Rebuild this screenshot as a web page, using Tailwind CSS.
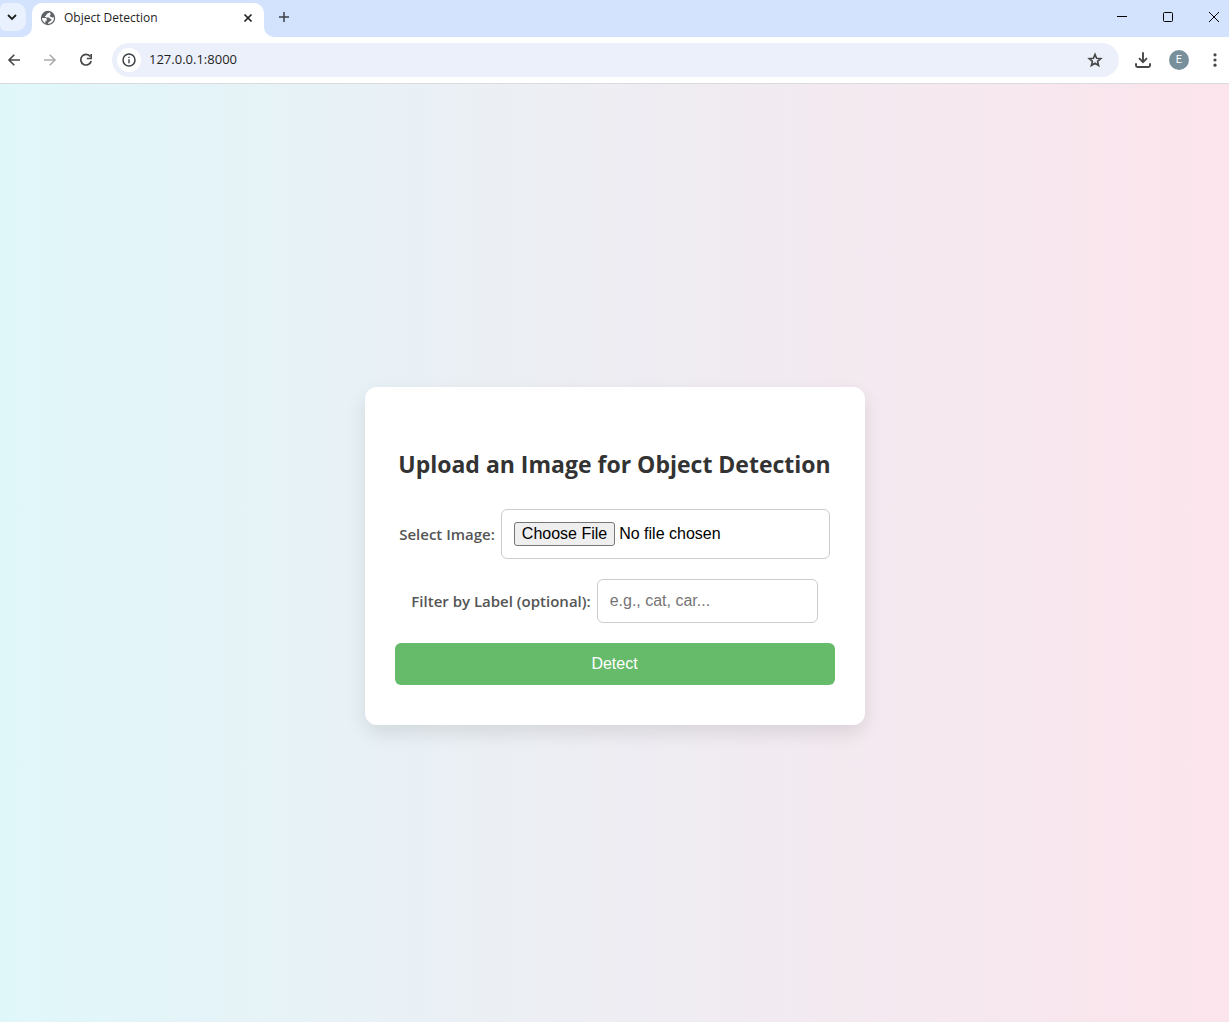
<!DOCTYPE html>
<html lang="en">
<head>
<meta charset="utf-8">
<meta name="viewport" content="width=device-width, initial-scale=1">
<title>Object Detection</title>
<script src="https://cdn.jsdelivr.net/npm/@tailwindcss/browser@4"></script>
</head>
<body class="flex min-h-screen flex-col bg-white font-['Open_Sans','Noto_Sans',sans-serif] text-[#1f1f1f]">

<!-- Tab strip -->
<header class="flex h-[37px] shrink-0 items-start bg-[#d3e3fd] pt-[3px]">
  <button type="button" aria-label="Search tabs" class="flex h-7 w-[26px] items-center justify-center rounded-r-[10px] rounded-l-md bg-[#eaf1fe]">
    <svg class="size-3 -translate-x-px" viewBox="0 0 12 12" fill="none" stroke="#1f1f1f" stroke-width="1.8"><path d="M2 4l4 4 4-4"/></svg>
  </button>
  <div class="relative ml-1.5 flex h-[34px] w-[232px] items-center rounded-t-[10px] bg-white pr-2.5 pb-1 pl-2">
    <svg class="absolute bottom-0 -left-2.5 size-2.5" viewBox="0 0 10 10" fill="#fff"><path d="M10 0v10H0A10 10 0 0 0 10 0z"/></svg>
    <svg class="absolute -right-2.5 bottom-0 size-2.5" viewBox="0 0 10 10" fill="#fff"><path d="M0 0v10h10A10 10 0 0 1 0 0z"/></svg>
    <svg class="size-4" viewBox="0 0 16 16"><circle cx="8" cy="8" r="7.2" fill="#5f6368"/><path d="M9.200 2.200C8.800 3.300 7.800 3.200 7 3.700c-.7.5-.2 1.300-.9 1.800-.6.4-1.200.3-1.200 1.100 0 .7.600.9 1.300.9h2.300c1 0 1.100.7 1.300 1.300.9-.1 1.700.4 1.700 1.200 0 .7-.6.9-1.200.9-.9 0-.8.900-1.300 1.300-.4.300-.9.300-.9.800v.9a6 6 0 0 0 5.800-6.900c-.9.7-1.800.5-2.500-.1-.6-.5-1.600-.1-1.700-1-.1-.7.8-.8.900-1.500.1-.6-.3-1.100-.3-1.500z" fill="#fff"/><path d="M2 8.100h3.300c1 0 1.500.7 1.500 1.500v1.200H5.400v2.500A6 6 0 0 1 2 8.100z" fill="#fff"/></svg>
    <span class="ml-2 flex-1 text-xs">Object Detection</span>
    <button type="button" aria-label="Close tab" class="size-3"><svg viewBox="0 0 12 12" fill="none" stroke="#1f1f1f" stroke-width="1.7"><path d="M2.500 2.500l7 7M9.500 2.500l-7 7"/></svg></button>
  </div>
  <button type="button" aria-label="New tab" class="ml-3.5 flex h-7 items-center"><svg class="size-3" viewBox="0 0 12 12" fill="none" stroke="#3c4043" stroke-width="1.500"><path d="M6 1v10M1 6h10"/></svg></button>
  <div class="ml-auto flex h-7 items-center gap-[34px] pr-[9px]">
    <button type="button" aria-label="Minimize" class="size-3"><svg viewBox="0 0 12 12" shape-rendering="crispEdges"><path d="M1 5h10v1H1z"/></svg></button>
    <button type="button" aria-label="Maximize" class="size-3"><svg viewBox="0 0 12 12" fill="none" stroke="#000"><rect x="1.500" y="1.500" width="9" height="9" rx="1"/></svg></button>
    <button type="button" aria-label="Close" class="size-3"><svg viewBox="0 0 12 12" fill="none" stroke="#000"><path d="M1 1l10 10M11 1L1 11"/></svg></button>
  </div>
</header>

<!-- Toolbar -->
<nav class="flex h-[47px] shrink-0 items-center border-b border-[#d8dce0] bg-white pr-[9px] pl-1.5">
  <button type="button" aria-label="Back" class="size-4"><svg viewBox="0 0 16 16" fill="none" stroke="#474747" stroke-width="1.600"><path d="M14 8H3.500M8.300 2.700L3 8l5.300 5.300"/></svg></button>
  <button type="button" aria-label="Forward" class="ml-5 size-4"><svg viewBox="0 0 16 16" fill="none" stroke="#adadad" stroke-width="1.600"><path d="M2 8h10.500M7.700 2.700L13 8l-5.300 5.300"/></svg></button>
  <button type="button" aria-label="Reload" class="ml-5 size-4"><svg viewBox="0 0 16 16"><path d="M12.300 4.500A5.300 5.300 0 1 0 13.200 9" fill="none" stroke="#474747" stroke-width="1.700"/><path d="M14 2v5.200H8.800V5.700h3.600V2z" fill="#474747"/></svg></button>
  <form class="ml-[18px] flex h-[34px] flex-1 items-center rounded-full bg-[#ecf0fa] pr-4 pl-[5px]">
    <button type="button" aria-label="Site information" class="flex size-6 items-center justify-center rounded-full bg-white"><svg class="size-4" viewBox="0 0 16 16"><circle cx="8" cy="8" r="6" fill="none" stroke="#3c4043" stroke-width="1.500"/><path d="M7.300 7.200h1.400v4H7.300zM7.300 4.700h1.400v1.400H7.300z" fill="#3c4043"/></svg></button>
    <input type="text" aria-label="Address" value="127.0.0.1:8000" class="ml-2 min-w-0 flex-1 bg-transparent text-[13px] outline-none">
    <button type="button" aria-label="Bookmark" class="size-4"><svg viewBox="0 0 16 16" fill="none" stroke="#474747" stroke-width="1.600"><path d="M8 2.400l1.600 3.900 4.200.3-3.200 2.800 1 4.100L8 11.300l-3.600 2.200 1-4.100-3.200-2.800 4.200-.3z"/></svg></button>
  </form>
  <button type="button" aria-label="Downloads" class="ml-4 size-4"><svg viewBox="0 0 16 16" fill="none" stroke="#474747" stroke-width="1.900"><path d="M8 .2v9.600M4 6.200l4 4 4-4M1 11.200v2.300q0 1.500 1.500 1.500h11q1.500 0 1.500-1.500v-2.300"/></svg></button>
  <button type="button" aria-label="Profile" class="ml-[18px] flex size-5 items-center justify-center rounded-full bg-[#78909c] font-[Roboto,sans-serif] text-[11px] text-white">E</button>
  <button type="button" aria-label="Menu" class="ml-[21px] h-4 w-2.5"><svg viewBox="0 0 10 16" fill="#474747"><circle cx="5" cy="2.800" r="1.600"/><circle cx="5" cy="8" r="1.600"/><circle cx="5" cy="13.200" r="1.600"/></svg></button>
</nav>

<!-- Upload page -->
<main class="flex flex-1 items-center justify-center bg-linear-to-r/srgb from-[#e0f7fa] to-[#fce4ec] pt-1.5">
  <section class="w-full max-w-[500px] rounded-xl bg-white px-[30px] py-10 text-center shadow-[0_8px_20px_rgba(0,0,0,0.1)]">
    <h2 class="mt-5 mb-7 text-[23px] leading-[34px] font-bold whitespace-nowrap text-[#333]">Upload an Image for Object Detection</h2>
    <form>
      <div class="mb-5 flex items-center justify-center gap-1.5">
        <label for="image" class="text-[15px] font-semibold whitespace-nowrap text-[#555]">Select Image:</label>
        <input id="image" type="file" class="h-[50px] w-[329px] min-w-0 rounded-md border border-[#ccc] p-3 font-['Liberation_Sans',Arial,sans-serif] text-base text-black file:mr-1 file:h-6 file:rounded-[3px] file:border file:border-[#767676] file:bg-[#efefef] file:px-[7px] file:leading-none">
      </div>
      <div class="mb-5 flex items-center justify-center gap-1.5">
        <label for="filter" class="text-[15px] font-semibold whitespace-nowrap text-[#555]">Filter by Label (optional):</label>
        <input id="filter" type="text" placeholder="e.g., cat, car..." class="h-11 w-[221px] min-w-0 rounded-md border border-[#ccc] px-3 font-['Liberation_Sans',Arial,sans-serif] text-base placeholder:text-[#757575]">
      </div>
      <button type="submit" class="h-[42px] w-full rounded-md bg-[#66bb6a] font-['Liberation_Sans',Arial,sans-serif] text-base text-white">Detect</button>
    </form>
  </section>
</main>
</body>
</html>
